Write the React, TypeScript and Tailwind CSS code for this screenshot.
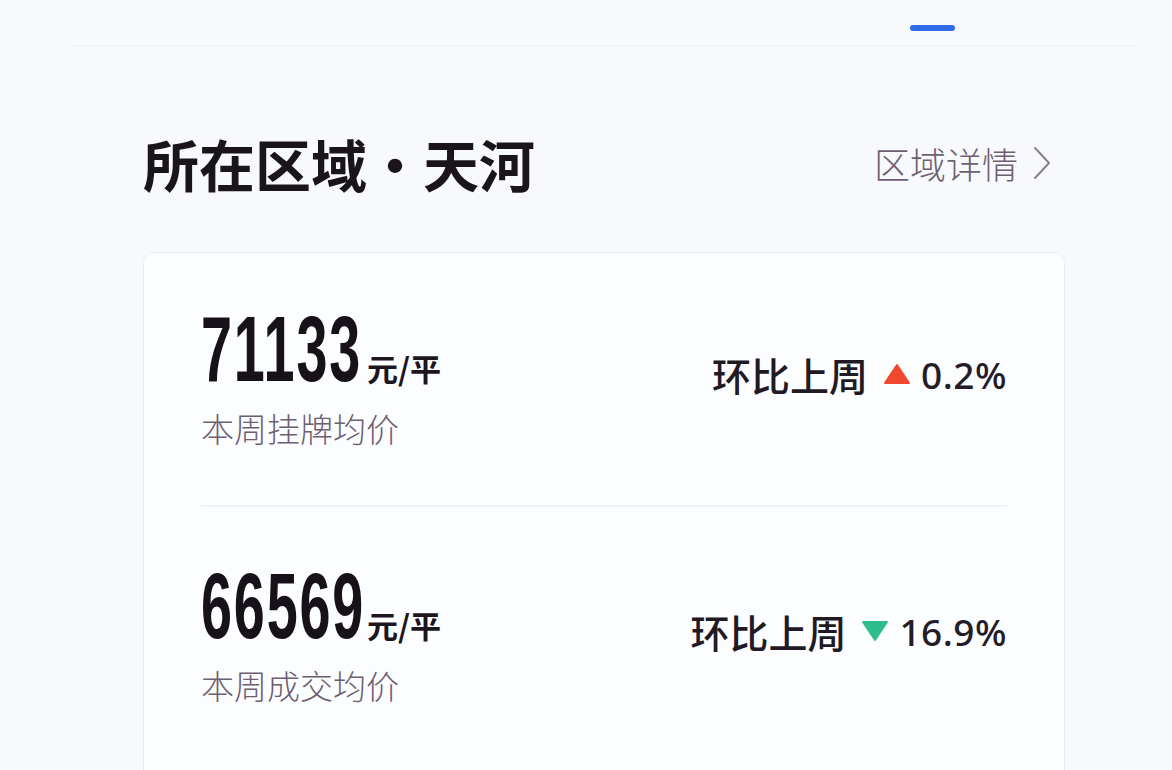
import React from 'react';

const CJK = "font-['Noto_Sans_CJK_SC','Noto_Sans',sans-serif]";

function Up() {
  return (
    <svg width="28" height="22" viewBox="0 0 28 22" className="shrink-0">
      <path d="M14 2 L26 20 L2 20 Z" fill="#f0492f" stroke="#f0492f" strokeWidth="2" strokeLinejoin="round" />
    </svg>
  );
}

function Down() {
  return (
    <svg width="28" height="22" viewBox="0 0 28 22" className="shrink-0">
      <path d="M2 2 L26 2 L14 20 Z" fill="#2fbd8c" stroke="#2fbd8c" strokeWidth="2" strokeLinejoin="round" />
    </svg>
  );
}

interface RowProps {
  price: string;
  label: string;
  change: string;
  up: boolean;
}

function PriceRow({ price, label, change, up }: RowProps) {
  return (
    <div className="flex items-center justify-between">
      <div className="flex flex-col">
        <div className="flex items-baseline">
          <span className="inline-block w-[166px]">
            <span className="inline-block origin-left scale-x-[0.6] font-['Liberation_Sans',sans-serif] font-bold text-[93px] tracking-[3px] leading-none text-[#17121a]">
              {price}
            </span>
          </span>
          <span className={`${CJK} text-[31px] font-bold leading-none text-[#1d161f]`}>元/平</span>
        </div>
        <div className={`${CJK} mt-[16px] text-[33px] font-light leading-none text-[#6c5f73]`}>{label}</div>
      </div>
      <div className="flex items-center">
        <span className={`${CJK} text-[39px] font-medium leading-none text-[#211923]`}>环比上周</span>
        <span className="ml-[15px]">{up ? <Up /> : <Down />}</span>
        <span className="ml-[10px] font-['Noto_Sans',sans-serif] text-[37px] font-medium tracking-[0.5px] leading-none text-[#241c27]">
          {change}
        </span>
      </div>
    </div>
  );
}

export default function App() {
  return (
    <div className="w-[1172px] h-[770px] overflow-hidden bg-[#f8f9fc]">
      <div className="ml-[72px] mr-[34px] h-[46px] border-b border-[#eef0f4] pt-[25px]">
        <div className="ml-[838px] h-[6px] w-[45px] rounded-full bg-[#2f6ce5]" />
      </div>

      <div className="flex items-center justify-between pl-[143px] pr-[120px] pt-[89px]">
        <h1 className={`${CJK} text-[56px] font-bold leading-none text-[#1a141b]`}>所在区域・天河</h1>
        <div className="flex items-center text-[#6d6073]">
          <span className={`${CJK} text-[36px] font-light leading-none`}>区域详情</span>
          <svg width="20" height="34" viewBox="0 0 20 34" className="ml-[14px]" fill="none">
            <path d="M3 2 L17 17 L3 32" stroke="#8a8090" strokeWidth="2" strokeLinecap="round" strokeLinejoin="round" />
          </svg>
        </div>
      </div>

      <div className="ml-[143px] mt-[61px] w-[922px] h-[600px] rounded-[12px] border border-[#eceef3] bg-[#fcfdff] px-[57px] pt-[50px]">
        <PriceRow price="71133" label="本周挂牌均价" change="0.2%" up />
        <div className="mt-[60px] mb-[53px] h-[2px] bg-[#f0f2f5]" />
        <PriceRow price="66569" label="本周成交均价" change="16.9%" up={false} />
      </div>
    </div>
  );
}
